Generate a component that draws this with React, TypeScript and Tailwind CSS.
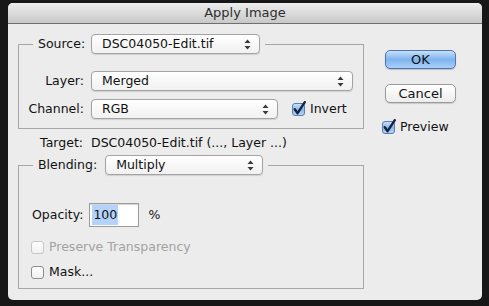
import React from 'react';

const font = { fontFamily: '"DejaVu Sans", "Liberation Sans", sans-serif' };

const Arrows = () => (
  <svg width="7" height="11" viewBox="0 0 7 11" className="shrink-0">
    <path d="M3.5 0.5 L6.5 4 L0.5 4 Z" fill="#3a3a3a" />
    <path d="M3.5 10.5 L6.5 7 L0.5 7 Z" fill="#3a3a3a" />
  </svg>
);

const Popup = ({ text, width }: { text: string; width: string }) => (
  <div
    className={`${width} h-[20px] flex items-center justify-between pl-[10px] pr-[8px] rounded-[4px] border border-[#a3a3a3] bg-gradient-to-b from-white to-[#f1f1f1] shadow-[0_1px_1px_rgba(0,0,0,0.12)] text-[12.5px] text-[#111]`}
  >
    <span>{text}</span>
    <Arrows />
  </div>
);

const CheckBox = ({ checked, disabled }: { checked?: boolean; disabled?: boolean }) => (
  <svg width="16" height="16" viewBox="0 0 16 16" className="shrink-0">
    <defs>
      <linearGradient id="cbBlue" x1="0" y1="0" x2="0" y2="1">
        <stop offset="0" stopColor="#cfe2f8" />
        <stop offset="0.5" stopColor="#8ab8ec" />
        <stop offset="1" stopColor="#b9d6f6" />
      </linearGradient>
      <linearGradient id="cbWhite" x1="0" y1="0" x2="0" y2="1">
        <stop offset="0" stopColor="#ffffff" />
        <stop offset="1" stopColor="#f0f0f0" />
      </linearGradient>
    </defs>
    <rect
      x="1.5"
      y="2.5"
      width="12"
      height="12"
      rx="2.5"
      fill={checked ? 'url(#cbBlue)' : 'url(#cbWhite)'}
      stroke={checked ? '#5a7fae' : disabled ? '#c6c6c6' : '#8e8e8e'}
    />
    {checked && (
      <path
        d="M3.8 8.2 L6.6 12.2 L13.8 1.2"
        fill="none"
        stroke="#16243f"
        strokeWidth="2.4"
        strokeLinecap="round"
        strokeLinejoin="round"
      />
    )}
  </svg>
);

const App = () => {
  return (
    <div className="w-[489px] h-[306px] bg-[#171717] pt-[3px] pl-[8px] overflow-hidden" style={font}>
      <div className="w-[474px] h-[297px] bg-[#ececec] rounded-[5px] overflow-hidden flex flex-col">
        <div className="h-[21px] shrink-0 bg-gradient-to-b from-[#ededed] to-[#c8c8c8] border-b border-[#6f6f6f] text-center text-[13px] leading-[20px] text-[#2e2e2e]">
          Apply Image
        </div>

        <div className="flex text-[12.5px] text-[#111]">
          <div className="pl-[10px] pt-[10px] w-[356px] shrink-0">
            <fieldset className="w-[346px] border border-[#a6a6a6] pb-[9px]">
              <legend className="ml-[14px] px-[5px] flex items-center">
                <span className="w-[46px] text-right">Source:</span>
                <div className="ml-[7px]">
                  <Popup text="DSC04050-Edit.tif" width="w-[169px]" />
                </div>
              </legend>
              <div className="mt-[17px] flex items-center">
                <span className="w-[65px] text-right">Layer:</span>
                <div className="ml-[7px]">
                  <Popup text="Merged" width="w-[262px]" />
                </div>
              </div>
              <div className="mt-[8px] flex items-center">
                <span className="w-[65px] text-right">Channel:</span>
                <div className="ml-[7px]">
                  <Popup text="RGB" width="w-[187px]" />
                </div>
                <div className="ml-[13px] flex items-center gap-[3px]">
                  <CheckBox checked />
                  <span>Invert</span>
                </div>
              </div>
            </fieldset>

            <div className="mt-[5px] h-[18px] flex items-center">
              <span className="w-[65px] text-right">Target:</span>
              <span className="ml-[8px]">DSC04050-Edit.tif (..., Layer ...)</span>
            </div>

            <fieldset className="mt-[3px] w-[346px] h-[134px] border border-[#a6a6a6] pl-[11px]">
              <legend className="ml-[3px] px-[5px] flex items-center">
                <span>Blending:</span>
                <div className="ml-[8px]">
                  <Popup text="Multiply" width="w-[158px]" />
                </div>
              </legend>
              <div className="mt-[28px] flex items-center">
                <span className="ml-[2px]">Opacity:</span>
                <div className="ml-[6px] w-[50px] h-[24px] bg-white border border-[#9c9c9c] shadow-[inset_0_1px_1px_rgba(0,0,0,0.18)] flex items-center pl-[2px]">
                  <span className="bg-[#b3d3fb] px-[1px] leading-[20px]">100</span>
                </div>
                <span className="ml-[9px]">%</span>
              </div>
              <div className="mt-[11px] flex items-center gap-[3px] text-[#a2a2a2]">
                <CheckBox disabled />
                <span>Preserve Transparency</span>
              </div>
              <div className="mt-[6px] flex items-center gap-[3px]">
                <CheckBox />
                <span>Mask...</span>
              </div>
            </fieldset>
          </div>

          <div className="ml-[21px] pt-[26px] flex flex-col">
            <button className="w-[71px] h-[19px] rounded-[5px] border border-[#4d74b3] bg-gradient-to-b from-[#c9e0f9] via-[#7fb3ee] to-[#a9d0fa] text-[13px] leading-[16px] text-[#111] shadow-[0_1px_1px_rgba(0,0,0,0.2)]">
              OK
            </button>
            <button className="mt-[15px] w-[71px] h-[19px] rounded-[5px] border border-[#9a9a9a] bg-gradient-to-b from-white to-[#ededed] text-[13px] leading-[16px] text-[#111] shadow-[0_1px_1px_rgba(0,0,0,0.15)]">
              Cancel
            </button>
            <div className="mt-[15px] -ml-[4px] flex items-center gap-[3px]">
              <CheckBox checked />
              <span>Preview</span>
            </div>
          </div>
        </div>
      </div>
    </div>
  );
};

export default App;
